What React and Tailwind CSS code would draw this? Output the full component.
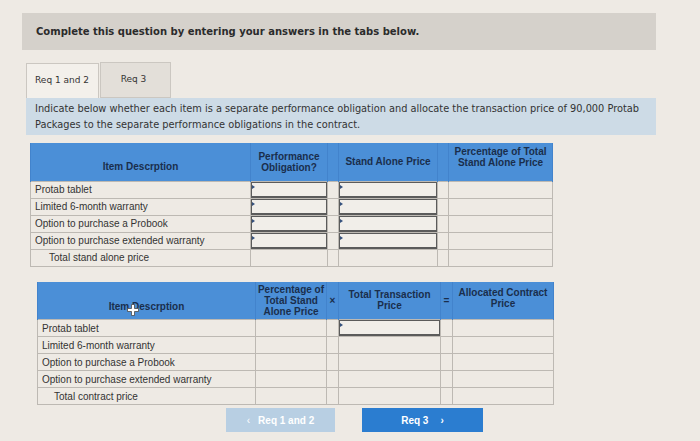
import React from 'react';

const rows1 = [
  'Protab tablet',
  'Limited 6-month warranty',
  'Option to purchase a Probook',
  'Option to purchase extended warranty',
];

function AnswerBox() {
  return (
    <div className="relative h-[16px] border border-[#5b5b5b] border-b-2 bg-[#f1eee9]">
      <span className="absolute left-0 top-[2px] w-0 h-0 border-y-[2px] border-y-transparent border-l-[3px] border-l-[#34507c]" />
    </div>
  );
}

const th = 'bg-[#4b8fd7] text-[#1a2e4c] font-bold text-[10px] leading-[11px] text-center align-middle border-x border-[#4283cc] px-0 whitespace-nowrap';
const td = 'border border-[#bdb9b3] h-[17px] p-0 text-[10px] text-[#333] align-middle whitespace-nowrap';

function Table1() {
  return (
    <table className="border-collapse table-fixed w-[522px]">
      <colgroup>
        <col className="w-[220px]" />
        <col className="w-[77px]" />
        <col className="w-[11px]" />
        <col className="w-[99px]" />
        <col className="w-[11px]" />
        <col className="w-[104px]" />
      </colgroup>
      <thead>
        <tr className="h-[38px]">
          <th className={th}><span className="relative top-[5px]">Item Descrption</span></th>
          <th className={th}>Performance<br />Obligation?</th>
          <th className={th}></th>
          <th className={th}>Stand Alone Price</th>
          <th className={th}></th>
          <th className={th}><span className="relative -top-[5px]">Percentage of Total<br />Stand Alone Price</span></th>
        </tr>
      </thead>
      <tbody>
        {rows1.map((r) => (
          <tr key={r}>
            <td className={td + ' pl-[4px]'}>{r}</td>
            <td className={td}><AnswerBox /></td>
            <td className={td}></td>
            <td className={td}><AnswerBox /></td>
            <td className={td}></td>
            <td className={td}></td>
          </tr>
        ))}
        <tr>
          <td className={td + ' pl-[18px]'}>Total stand alone price</td>
          <td className={td}></td>
          <td className={td}></td>
          <td className={td}></td>
          <td className={td}></td>
          <td className={td}></td>
        </tr>
      </tbody>
    </table>
  );
}

function Table2() {
  return (
    <table className="border-collapse table-fixed w-[516px]">
      <colgroup>
        <col className="w-[218px]" />
        <col className="w-[71px]" />
        <col className="w-[12px]" />
        <col className="w-[102px]" />
        <col className="w-[12px]" />
        <col className="w-[101px]" />
      </colgroup>
      <thead>
        <tr className="h-[38px]">
          <th className={th}>
            <span className="relative top-[6px]">
              Item Descrption
              <svg className="absolute left-[18px] top-[3px]" width="12" height="12" viewBox="0 0 12 12">
                <path d="M4.5 0.5h3v4h4v3h-4v4h-3v-4h-4v-3h4z" fill="#fff" stroke="#4a4a4a" strokeWidth="0.8" />
              </svg>
            </span>
          </th>
          <th className={th}>Percentage of<br />Total Stand<br />Alone Price</th>
          <th className={th}>×</th>
          <th className={th}>Total Transaction<br />Price</th>
          <th className={th}>=</th>
          <th className={th}><span className="relative -top-[2px]">Allocated Contract<br />Price</span></th>
        </tr>
      </thead>
      <tbody>
        {rows1.map((r, i) => (
          <tr key={r}>
            <td className={td + ' pl-[4px]'}>{r}</td>
            <td className={td}></td>
            <td className={td}></td>
            <td className={td}>{i === 0 ? <AnswerBox /> : null}</td>
            <td className={td}></td>
            <td className={td}></td>
          </tr>
        ))}
        <tr>
          <td className={td + ' pl-[16px]'}>Total contract price</td>
          <td className={td}></td>
          <td className={td}></td>
          <td className={td}></td>
          <td className={td}></td>
          <td className={td}></td>
        </tr>
      </tbody>
    </table>
  );
}

export default function App() {
  return (
    <div
      className="w-[700px] h-[441px] bg-[#eeeae4] overflow-hidden pt-[13px]"
      style={{ fontFamily: '"Liberation Sans", Arial, sans-serif' }}
    >
      <div className="ml-[22px] w-[634px] h-[37px] bg-[#d5d1cb] flex items-center pl-[14px]">
        <p className="font-['DejaVu_Sans',sans-serif] font-bold text-[10px] text-[#2b2b2b]">
          Complete this question by entering your answers in the tabs below.
        </p>
      </div>

      <div className="ml-[26px] mt-[12px] w-[630px]">
        <div className="flex items-end h-[36px]">
          <div className="h-[35px] w-[73px] bg-[#f3f0eb] border border-[#cbc7c1] border-b-0 flex items-center pl-[8px] font-['DejaVu_Sans',sans-serif] text-[9px] text-[#333]">
            Req 1 and 2
          </div>
          <div className="h-[36px] w-[71px] ml-[1px] bg-[#e3dfd9] border border-[#cbc7c1] flex items-center justify-center pr-[4px] font-['DejaVu_Sans',sans-serif] text-[9px] text-[#333]">
            Req 3
          </div>
        </div>

        <div className="bg-[#cddbe6] h-[37px] px-[9px] pt-[3px] font-['DejaVu_Sans',sans-serif] text-[9.8px] leading-[16px] text-[#333] whitespace-nowrap">
          Indicate below whether each item is a separate performance obligation and allocate the transaction price of 90,000 Protab
          <br />
          Packages to the separate performance obligations in the contract.
        </div>

        <div className="pl-[4px] mt-[8px]">
          <Table1 />
        </div>

        <div className="pl-[11px] mt-[15px]">
          <Table2 />
        </div>

        <div className="flex mt-[3px] ml-[200px] gap-[27px]">
          <div className="w-[109px] h-[24px] bg-[#b8cfe3] flex items-center justify-center gap-[8px] text-white font-bold text-[10px]">
            <span className="font-normal">‹</span>
            <span>Req 1 and 2</span>
          </div>
          <div className="w-[121px] h-[24px] bg-[#2b7dd0] flex items-center justify-center gap-[12px] text-white font-bold text-[10px]">
            <span>Req 3</span>
            <span>›</span>
          </div>
        </div>
      </div>
    </div>
  );
}
